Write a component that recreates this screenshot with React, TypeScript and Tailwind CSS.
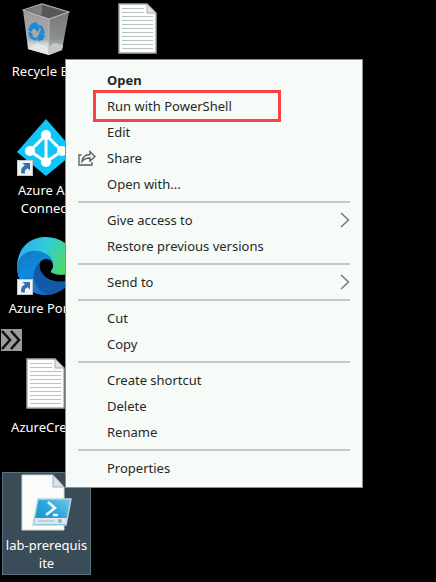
import type { ReactNode } from "react";

function RecycleBin() {
  return (
    <svg width="48" height="53" viewBox="0 0 48 53" aria-hidden="true">
      <defs>
        <linearGradient id="bin-front" x1="0" y1="0" x2="0" y2="1">
          <stop offset="0" stopColor="#9a9b9c" />
          <stop offset="0.65" stopColor="#a9abac" />
          <stop offset="0.75" stopColor="#cfd4d6" />
          <stop offset="1" stopColor="#e3e7e8" />
        </linearGradient>
        <linearGradient id="bin-side" x1="0" y1="0" x2="0" y2="1">
          <stop offset="0" stopColor="#77797a" />
          <stop offset="0.6" stopColor="#8b8d8e" />
          <stop offset="1" stopColor="#cdd1d2" />
        </linearGradient>
      </defs>
      <path d="M1 7 27 16 27 52 6 46Z" fill="url(#bin-front)" />
      <path d="M27 16 47 9 40 47 27 52Z" fill="url(#bin-side)" />
      <path d="M1 7 20 1 47 9 27 16Z" fill="#55585a" stroke="#b3b5b6" strokeWidth="1.2" />
      <path d="M4 7 20 2 20 11 18 12Z" fill="#7b7d7e" />
      <path d="M6 46 15 40 27 44 27 52Z" fill="#e4e8e9" />
      <path d="M27 44 32 40 41 42 40 47 27 52Z" fill="#c3c8ca" />
      <path d="M27 16V51" stroke="#b6b8b9" strokeWidth="1" />
      <g fill="#1689de">
        <path d="M9 21 14 19 18 24 16 29 12 25 9 29 6 27Z" />
        <path d="M17 21 21 24 23 31 17 30 19 27Z" />
        <path d="M6 29 10 30 11 34 15 35 14 38 8 35Z" />
        <path d="M15 34 18 30 23 32 21 37 16 38Z" />
      </g>
    </svg>
  );
}

function TextFile() {
  return (
    <svg width="40" height="52" viewBox="0 0 40 52" aria-hidden="true">
      <path d="M1 1H29L38 10V50H1Z" fill="#fbfdfc" stroke="#a7a9a8" strokeWidth="1.4" />
      <path d="M29 1V10H38Z" fill="#dfe4e2" stroke="#a9adab" />
      <g stroke="#b9c4c1" strokeWidth="1.2">
        <path d="M4 5.500H26M4 9.500H26M4 13.500H35M4 17.500H35M4 21.500H35M4 25.500H35M4 29.500H35M4 33.500H35M4 37.500H35M4 41.500H35M4 45.500H35" />
      </g>
    </svg>
  );
}

function ShortcutBadge() {
  return (
    <svg className="absolute bottom-0 left-0" width="16" height="16" viewBox="0 0 16 16" aria-hidden="true">
      <rect x="0.500" y="0.500" width="15" height="15" fill="#f1f4f6" stroke="#c5c8ca" />
      <path d="M5.500 3H13V10.500L10.700 8.300C8 9.500 7.500 11 8 13.500H4.500C3.300 9.500 5 7 8 5.600Z" fill="#356fb0" />
    </svg>
  );
}

function AzureAdConnect() {
  return (
    <svg width="58" height="57" viewBox="0 0 58 57" aria-hidden="true">
      <path d="M29 0 58 33 29 57 0 33Z" fill="#12c5f8" />
      <path d="M29 16 13 32 29 43 45 32ZM29 16V43" fill="none" stroke="#fff" strokeWidth="3" />
      <g fill="#fff">
        <circle cx="29" cy="16" r="5" />
        <circle cx="13" cy="32" r="5" />
        <circle cx="45" cy="32" r="5" />
        <circle cx="29" cy="43" r="5" />
      </g>
    </svg>
  );
}

function Edge() {
  return (
    <svg width="58" height="58" viewBox="0 0 58 58" aria-hidden="true">
      <defs>
        <linearGradient id="edge-top" x1="0" y1="0.300" x2="1" y2="0.600">
          <stop offset="0" stopColor="#2dadea" />
          <stop offset="0.450" stopColor="#31ccd8" />
          <stop offset="0.750" stopColor="#43d58a" />
          <stop offset="1" stopColor="#5cdb51" />
        </linearGradient>
        <linearGradient id="edge-left" x1="0" y1="0" x2="0.500" y2="1">
          <stop offset="0" stopColor="#1477c5" />
          <stop offset="0.500" stopColor="#1189dc" />
          <stop offset="1" stopColor="#1271d0" />
        </linearGradient>
      </defs>
      <path d="M0 29C1 10 13 0 29 0C46 0 58 12 58 25C58 35 48 40 38 37L20 30Z" fill="url(#edge-top)" />
      <path d="M0 29C2 17 12 13 20 14C30 15 37 21 36 29L30 45 40 55C37 57 33 58 29 58C12 58-1 45 0 29Z" fill="url(#edge-left)" />
      <path d="M24 24C12 33 15 52 31 58C42 57 50 51 54 42L44 40 30 36Z" fill="#1459a7" />
      <path d="M24 24C29 20 36 22 36 29C36 33 32 34 35 37C41 40 50 40 58 34V41L54 42C46 46 36 45 30 41C23 36 21 29 24 24Z" fill="#000" />
    </svg>
  );
}

function PowerShellFile() {
  return (
    <svg width="52" height="58" viewBox="0 0 52 58" aria-hidden="true">
      <defs>
        <linearGradient id="ps-blue" x1="0" y1="1" x2="1" y2="0">
          <stop offset="0" stopColor="#1a8fc9" />
          <stop offset="0.500" stopColor="#27a3d8" />
          <stop offset="1" stopColor="#75c9e8" />
        </linearGradient>
      </defs>
      <path d="M1 1H32L43 13V56H1Z" fill="#fafcfb" stroke="#d3d9d9" />
      <path d="M32 1V13H43Z" fill="#dde3e4" stroke="#a3adb2" />
      <path d="M17 25H50L45 51H12Z" fill="url(#ps-blue)" stroke="#b8d3df" strokeWidth="1.500" />
      <path d="M14 44H46L45 50H13Z" fill="#dce8ee" />
      <path d="M17 47H33" stroke="#a5b9c3" />
      <circle cx="39" cy="47" r="2" fill="#9aabb4" />
      <path d="M27 28 34 34 25 41M32 41H37" fill="none" stroke="#f3fbfd" strokeWidth="2.500" />
    </svg>
  );
}

type DesktopIconProps = {
  place: string;
  label: string;
  wrap?: string;
  shortcut?: boolean;
  children: ReactNode;
};

function DesktopIcon({ place, label, wrap = "", shortcut, children }: DesktopIconProps) {
  return (
    <button type="button" className={`absolute flex flex-col items-center text-white ${place}`}>
      <span className="relative">
        {children}
        {shortcut && <ShortcutBadge />}
      </span>
      <span className={`w-full text-center ${wrap}`}>{label}</span>
    </button>
  );
}

function ShareIcon() {
  return (
    <svg width="18" height="16" viewBox="0 0 18 16" fill="none" stroke="#555a57" strokeWidth="1.300" aria-hidden="true">
      <path d="M3.500 5H1V15H14V12" />
      <path d="M4 11.500C4.500 7 7.500 4.500 12 4.500V1.500L17 6.500 12 11V8C8.500 8 6 9 4 11.500Z" />
    </svg>
  );
}

type Item = { label: string; bold?: boolean; share?: boolean; submenu?: boolean; marked?: boolean };

const groups: Item[][] = [
  [
    { label: "Open", bold: true },
    { label: "Run with PowerShell", marked: true },
    { label: "Edit" },
    { label: "Share", share: true },
    { label: "Open with..." },
  ],
  [{ label: "Give access to", submenu: true }, { label: "Restore previous versions" }],
  [{ label: "Send to", submenu: true }],
  [{ label: "Cut" }, { label: "Copy" }],
  [{ label: "Create shortcut" }, { label: "Delete" }, { label: "Rename" }],
  [{ label: "Properties" }],
];

function MenuItem({ item }: { item: Item }) {
  return (
    <button
      type="button"
      role="menuitem"
      className={`relative flex h-[26px] w-full items-center text-left ${item.bold ? "font-bold" : ""}`}
    >
      <span className="w-[29px] shrink-0">{item.share && <ShareIcon />}</span>
      <span className="grow">{item.label}</span>
      {item.submenu && (
        <svg width="10" height="16" viewBox="0 0 10 16" fill="none" stroke="#77778a" strokeWidth="1.500" aria-hidden="true">
          <path d="M1 1 8.500 8 1 15" />
        </svg>
      )}
      {item.marked && <span className="absolute -inset-y-[3px] left-[15px] w-[188px] border-3 border-[#fb4144]" />}
    </button>
  );
}

export default function App() {
  return (
    <main className="relative h-screen overflow-hidden bg-black font-['Noto_Sans','Open_Sans',sans-serif] text-[13px] leading-[18px]">
      <DesktopIcon place="left-0 top-[3px] w-[92px] gap-[6px]" label="Recycle Bin">
        <RecycleBin />
      </DesktopIcon>
      <div className="absolute left-[118px] top-[3px]">
        <TextFile />
      </div>
      <DesktopIcon place="left-0 top-[119px] w-[92px] gap-[5px]" label="Azure AD Connect" shortcut>
        <AzureAdConnect />
      </DesktopIcon>
      <DesktopIcon place="left-0 top-[237px] w-[92px] gap-[4px]" label="Azure Portal" shortcut>
        <Edge />
      </DesktopIcon>
      <svg className="absolute left-px top-[329px]" width="21" height="22" viewBox="0 0 21 22" aria-hidden="true">
        <rect width="21" height="22" fill="#9b9b9b" />
        <path d="M1 2 9 11 1 20M10 2 18 11 10 20" fill="none" stroke="#111" strokeWidth="2.500" />
      </svg>
      <DesktopIcon place="left-0 top-[358px] w-[92px] gap-[8px]" label="AzureCreds">
        <TextFile />
      </DesktopIcon>
      <DesktopIcon
        place="left-[2px] top-[472px] w-[89px] gap-[4px] border border-[#587482] bg-[#3b4c59] pt-px pb-[2px]"
        label="lab-prerequisite"
        wrap="break-all px-[2px]"
      >
        <PowerShellFile />
      </DesktopIcon>

      <div
        role="menu"
        className="absolute left-[65px] top-[59px] w-[298px] divide-y-2 divide-[#c5c9c6] border border-[#8f9190] bg-[#f6fbf8] px-3 pt-[3px] pb-[2px] text-[#262826]"
      >
        {groups.map((group) => (
          <div key={group[0].label} role="group" className="py-1">
            {group.map((item) => (
              <MenuItem key={item.label} item={item} />
            ))}
          </div>
        ))}
      </div>
    </main>
  );
}
